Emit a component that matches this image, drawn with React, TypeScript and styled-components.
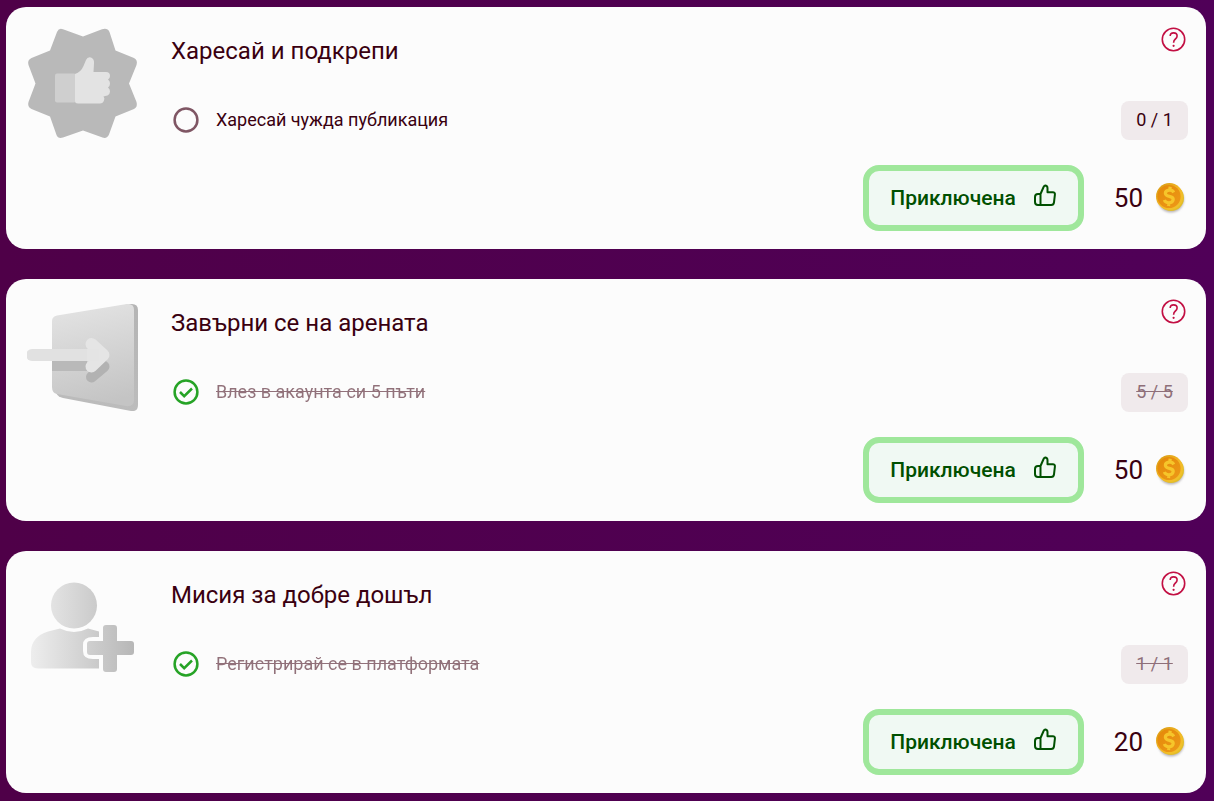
import React from "react";
import styled, { createGlobalStyle } from "styled-components";

const GlobalStyle = createGlobalStyle`
  *, *::before, *::after { box-sizing: border-box; }
  body {
    margin: 0;
    background: linear-gradient(90deg, #4f0048, #500058);
    color: #3a0010;
    font-family: Roboto, "Noto Sans", sans-serif;
  }
`;

const MissionList = styled.main`
  display: flex;
  flex-direction: column;
  gap: 30px;
  padding: 7px 8px 7px 6px;
`;

const Card = styled.article`
  display: flex;
  gap: 32px;
  padding: 20px 18px 18px 21px;
  border-radius: 20px;
  background: #fcfcfc;
`;

const Artwork = styled.svg`
  flex: none;
  width: 112px;
  height: 112px;
`;

const Content = styled.div`
  flex: 1;
  min-width: 0;
`;

const Header = styled.header`
  display: flex;
  align-items: flex-start;
  justify-content: space-between;
  padding-right: 2px;
`;

const Title = styled.h2`
  margin: 0;
  padding-top: 8px;
  font-size: 24px;
  font-weight: 400;
  line-height: 32px;
`;

const HelpButton = styled.button`
  display: flex;
  padding: 0;
  border: 0;
  background: none;
  color: #c20f43;
  cursor: pointer;
`;

const Task = styled.div`
  display: flex;
  align-items: center;
  justify-content: space-between;
  margin-top: 34px;
  padding-left: 2px;
`;

const TaskLabel = styled.div`
  display: flex;
  align-items: center;
  gap: 17px;
  padding-bottom: 1px;
`;

const TaskName = styled.span<{ $done: boolean }>`
  font-size: 18px;
  line-height: 24px;
  opacity: ${(p) => (p.$done ? 0.55 : 1)};
  text-decoration: ${(p) => (p.$done ? "line-through" : "none")};
`;

const Counter = styled.span<{ $done: boolean }>`
  min-width: 67px;
  padding: 7px 12px 8px;
  border-radius: 8px;
  background: #f0eaec;
  color: ${(p) => (p.$done ? "#8e6f79" : "#3a0010")};
  font-size: 18px;
  line-height: 24px;
  text-align: center;
  text-decoration: ${(p) => (p.$done ? "line-through" : "none")};
`;

const Footer = styled.footer`
  display: flex;
  align-items: center;
  justify-content: flex-end;
  gap: 30px;
  margin-top: 25px;
  padding-right: 1px;
`;

const ClaimButton = styled.button`
  display: flex;
  align-items: center;
  gap: 17px;
  height: 66px;
  padding: 0 21px;
  border: 6px solid #9fe79b;
  border-radius: 16px;
  background: #f0f9f3;
  color: #005000;
  font: 500 21px/28px Roboto, "Noto Sans", sans-serif;
  cursor: pointer;

  svg { margin-bottom: 6px; }
`;

const Reward = styled.div`
  display: flex;
  align-items: center;
  gap: 12px;
  font-size: 26px;
  line-height: 32px;
`;

const LikeArt = () => (
  <Artwork viewBox="0 0 112 112" aria-hidden="true">
    <path
      d="M56 9.500 75 2.300Q80.500 .5 82.500 5L88.500 23.500 107 31Q111 33 109.500 38L102 56.500 109.500 75Q111 80 107 82L88.500 89.500 82 107.500Q80 112 75.500 110.500L56 103.500 36 110.500Q31 112 29.500 108L23 89.500 4.500 82Q0 79.500 1.500 75L8.500 56.500 1.500 38Q0 33 4.500 31L23 23.500 30 5Q32 .5 36 2.300Z"
      fill="#b9b9b9"
    />
    <rect x="28" y="46.500" width="21" height="29" rx="2" fill="#cfcfcf" />
    <path
      d="M48 47Q54 45 56.500 39L59 33Q60.500 29.500 64 30.500 67.500 32 67 36.500L66.500 45H79Q83 45 83 49 83 51.500 81 52.500 83 54 83 56.500 83 59 81 60.500 83 62 83 64.500 83 67 80.500 68.500 78 69 76.500 69.500 78 71 77 73.500 76 76.500 73 76.500H51Q48 76.500 48 74Z"
      fill="#e3e3e3"
    />
  </Artwork>
);

const DoorArt = () => (
  <Artwork viewBox="0 0 112 112" aria-hidden="true">
    <defs>
      <linearGradient id="door" x1=".3" y1="0" x2=".5" y2="1">
        <stop stopColor="#e3e3e3" />
        <stop offset="1" stopColor="#c4c4c4" />
      </linearGradient>
      <linearGradient id="doorEdge" x1="0" y1="0" x2="0" y2="1">
        <stop stopColor="#b4b4b4" />
        <stop offset="1" stopColor="#bcbcbc" />
      </linearGradient>
    </defs>
    <path d="M34 18 103 5Q111 4 111 11V106Q111 113 104 112L36 99Q31 98 29 94Z" fill="url(#doorEdge)" />
    <path d="M30 16.500 100 5Q107 4 107 11V101Q107 108 99 107L30 95Q25 94 25 88V22Q25 17.500 30 16.500Z" fill="url(#door)" />
    <path d="M25 61H60V72H25Z" fill="#b9b9b9" />
    <path d="M64.500 78 77 67.500" fill="none" stroke="#b2b2b2" strokeWidth="11" strokeLinecap="round" />
    <path d="M5 56H72" fill="none" stroke="#e1e1e1" strokeWidth="12" strokeLinecap="round" />
    <path d="M64.500 45 76.500 56 64.500 67.500" fill="none" stroke="#e5e5e5" strokeWidth="12" strokeLinecap="round" strokeLinejoin="round" />
    <path d="M60 50H72V62H60Z" fill="#e4e4e4" />
  </Artwork>
);

const UserArt = () => (
  <Artwork viewBox="0 0 112 112" aria-hidden="true">
    <defs>
      <linearGradient id="user" x1="5" y1="60" x2="107" y2="60" gradientUnits="userSpaceOnUse">
        <stop stopColor="#ededed" />
        <stop offset="1" stopColor="#b7b7b7" />
      </linearGradient>
    </defs>
    <circle cx="47" cy="34.500" r="23" fill="url(#user)" />
    <path
      d="M33 57.500Q47 64.500 61 57.500L72 60.500V66H66Q56 66 56 74V80Q56 88 66 88H72V97.500H11Q4 97.500 4 91V81Q4 66 21 60.500Z"
      fill="url(#user)"
    />
    <path
      d="M79 54H87Q90 54 90 57V70H104Q107 70 107 73V81Q107 84 104 84H90V98Q90 101 87 101H79Q76 101 76 98V84H63Q60 84 60 81V73Q60 70 63 70H76V57Q76 54 79 54Z"
      fill="url(#user)"
    />
  </Artwork>
);

const StatusIcon = ({ done }: { done: boolean }) => (
  <svg width="26" height="26" viewBox="0 0 26 26" fill="none" aria-hidden="true">
    <circle cx="13" cy="13" r="11.400" stroke={done ? "#26a326" : "#7f5664"} strokeWidth="2.500" />
    {done && (
      <path d="m7 13 4.200 4.200 7.800-7.700" stroke="#26a326" strokeWidth="2.500" />
    )}
  </svg>
);

const HelpIcon = () => (
  <svg width="25" height="25" viewBox="0 0 25 25" fill="none" aria-hidden="true">
    <circle cx="12.500" cy="12.500" r="11.200" stroke="currentColor" strokeWidth="1.600" />
    <path
      d="M9.200 9Q9.200 5.900 12.600 5.900 16.100 5.900 16.100 9 16.100 10.700 14.400 12 12.600 13.400 12.600 15.800"
      stroke="currentColor"
      strokeWidth="1.600"
    />
    <circle cx="12.600" cy="18.800" r="1.100" fill="currentColor" />
  </svg>
);

const ThumbIcon = () => (
  <svg
    width="24"
    height="24"
    viewBox="0 0 24 24"
    fill="none"
    stroke="currentColor"
    strokeWidth="2"
    strokeLinejoin="round"
    aria-hidden="true"
  >
    <path d="M7.500 11 10.600 4Q11.200 2.500 12.600 2.600 14.500 3 14.500 5.200V9.300H19.800Q22.200 9.300 21.900 11.600L21 19.300Q20.700 22 18.200 22H5Q2 22 2 19V14Q2 11 5 11H7.500V22" />
  </svg>
);

const Coin = () => (
  <svg width="32" height="34" viewBox="0 0 32 34" fill="none" aria-hidden="true">
    <defs>
      <linearGradient id="rim" x1="4" y1="2" x2="28" y2="28" gradientUnits="userSpaceOnUse">
        <stop stopColor="#d99a12" />
        <stop offset=".5" stopColor="#f3b826" />
        <stop offset="1" stopColor="#f0c52c" />
      </linearGradient>
      <linearGradient id="face" x1="5" y1="5" x2="24" y2="26" gradientUnits="userSpaceOnUse">
        <stop stopColor="#e58a0a" />
        <stop offset="1" stopColor="#ec9818" />
      </linearGradient>
      <filter id="soft" x="-20%" y="-20%" width="140%" height="140%">
        <feGaussianBlur stdDeviation="1" />
      </filter>
    </defs>
    <circle cx="16" cy="18.500" r="13" fill="#b9b5b8" filter="url(#soft)" />
    <circle cx="16" cy="17" r="13" fill="#e2bd28" />
    <circle cx="14.500" cy="15.500" r="13.500" fill="url(#rim)" />
    <circle cx="14" cy="15.500" r="11.600" fill="url(#face)" />
    <path
      d="M18.700 11.500Q17.500 9 14.500 9.200 10.200 9.700 10.400 12.500 10.600 14.800 14.300 15.300 18.500 16 18.200 18.800 17.700 21.700 14 21.800 10.500 21.900 9.300 19M15.200 5.800 14.700 9.200M13.900 21.800 13.500 25"
      stroke="#f6c52a"
      strokeWidth="3.200"
    />
  </svg>
);

const missions = [
  { title: "Харесай и подкрепи", task: "Харесай чужда публикация", count: "0 / 1", done: false, reward: 50, Art: LikeArt },
  { title: "Завърни се на арената", task: "Влез в акаунта си 5 пъти", count: "5 / 5", done: true, reward: 50, Art: DoorArt },
  { title: "Мисия за добре дошъл", task: "Регистрирай се в платформата", count: "1 / 1", done: true, reward: 20, Art: UserArt },
];

export default function App() {
  return (
    <>
      <GlobalStyle />
      <MissionList>
        {missions.map(({ title, task, count, done, reward, Art }) => (
          <Card key={title}>
            <Art />
            <Content>
              <Header>
                <Title>{title}</Title>
                <HelpButton type="button" aria-label="Помощ">
                  <HelpIcon />
                </HelpButton>
              </Header>
              <Task>
                <TaskLabel>
                  <StatusIcon done={done} />
                  <TaskName $done={done}>{task}</TaskName>
                </TaskLabel>
                <Counter $done={done}>{count}</Counter>
              </Task>
              <Footer>
                <ClaimButton type="button">
                  Приключена
                  <ThumbIcon />
                </ClaimButton>
                <Reward>
                  {reward}
                  <Coin />
                </Reward>
              </Footer>
            </Content>
          </Card>
        ))}
      </MissionList>
    </>
  );
}
